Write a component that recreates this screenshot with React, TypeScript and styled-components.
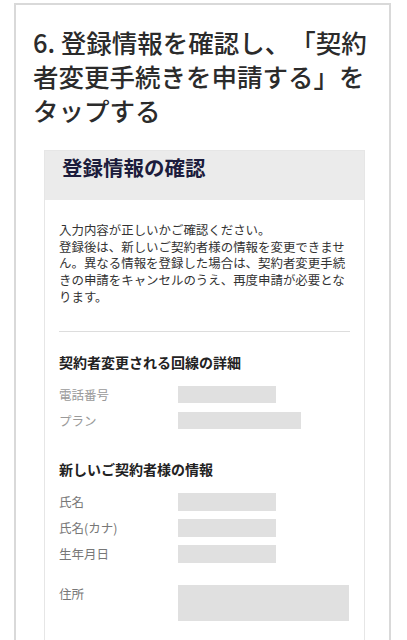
import React from "react";
import styled, { createGlobalStyle } from "styled-components";

const GlobalStyle = createGlobalStyle`
  html, body {
    margin: 0;
    padding: 0;
    background: #fff;
    font-family: "Noto Sans CJK JP", "Noto Sans", sans-serif;
  }
`;

const Page = styled.div`
  padding: 3px 16px 0 14px;
  height: 637px;
  overflow: hidden;
`;

const StepCard = styled.div`
  border: 2px solid #d9d9d9;
  border-bottom: none;
  padding: 20px 24px 0 0;
  height: 100%;
  box-sizing: border-box;
`;

const StepTitle = styled.h1`
  margin: 0 0 0 17px;
  font-size: 25.5px;
  line-height: 34px;
  font-weight: 500;
  color: #2b2b2b;
  white-space: nowrap;
  text-spacing-trim: space-all;
`;

const Screen = styled.div`
  margin: 23px 0 0 28px;
  border: 1px solid #e6e6e6;
  border-bottom: none;
  height: 600px;
`;

const ScreenHeader = styled.div`
  background: #ebebeb;
  padding: 2px 17px 19px;
`;

const ScreenTitle = styled.h2`
  margin: 0;
  font-size: 20.5px;
  line-height: 28px;
  font-weight: 700;
  color: #1c1c3c;
`;

const ScreenBody = styled.div`
  padding: 22px 14px 0;
`;

const Notice = styled.p`
  margin: 0;
  font-size: 12.45px;
  line-height: 16.7px;
  color: #333;
  text-spacing-trim: space-all;
`;

const Divider = styled.hr`
  margin: 25px 0 0;
  border: none;
  border-top: 1px solid #dddddd;
`;

const SectionTitle = styled.h3<{ $top: number }>`
  margin: ${({ $top }) => $top}px 0 0;
  font-size: 14px;
  line-height: 20px;
  font-weight: 700;
  color: #222;
`;

const Rows = styled.div`
  display: flex;
  flex-direction: column;
  gap: 8px;
  margin-top: 14px;
`;

const Row = styled.div<{ $gapTop?: number }>`
  display: grid;
  grid-template-columns: 119px auto;
  align-items: start;
  margin-top: ${({ $gapTop }) => $gapTop ?? 0}px;
`;

const Label = styled.span<{ $muted?: boolean }>`
  font-size: 12.5px;
  line-height: 18px;
  color: ${({ $muted }) => ($muted ? "#9a9a9a" : "#777")};
`;

const Blank = styled.div<{ $w: number; $h?: number }>`
  width: ${({ $w }) => $w}px;
  height: ${({ $h }) => $h ?? 17}px;
  background: #e0e0e0;
`;

export default function App() {
  return (
    <>
      <GlobalStyle />
      <Page>
        <StepCard>
          <StepTitle>
            6. 登録情報を確認し、「契約
            <br />
            者変更手続きを申請する」を
            <br />
            タップする
          </StepTitle>
          <Screen>
            <ScreenHeader>
              <ScreenTitle>登録情報の確認</ScreenTitle>
            </ScreenHeader>
            <ScreenBody>
              <Notice>
                入力内容が正しいかご確認ください。
                <br />
                登録後は、新しいご契約者様の情報を変更できません。異なる情報を登録した場合は、契約者変更手続きの申請をキャンセルのうえ、再度申請が必要となります。
              </Notice>
              <Divider />
              <SectionTitle $top={20}>契約者変更される回線の詳細</SectionTitle>
              <Rows>
                <Row>
                  <Label $muted>電話番号</Label>
                  <Blank $w={98} />
                </Row>
                <Row>
                  <Label $muted>プラン</Label>
                  <Blank $w={123} />
                </Row>
              </Rows>
              <SectionTitle $top={29}>新しいご契約者様の情報</SectionTitle>
              <Rows>
                <Row>
                  <Label>氏名</Label>
                  <Blank $w={98} $h={18} />
                </Row>
                <Row>
                  <Label>氏名(カナ)</Label>
                  <Blank $w={98} $h={18} />
                </Row>
                <Row>
                  <Label>生年月日</Label>
                  <Blank $w={98} $h={18} />
                </Row>
                <Row $gapTop={14}>
                  <Label>住所</Label>
                  <Blank $w={171} $h={36} />
                </Row>
              </Rows>
            </ScreenBody>
          </Screen>
        </StepCard>
      </Page>
    </>
  );
}
